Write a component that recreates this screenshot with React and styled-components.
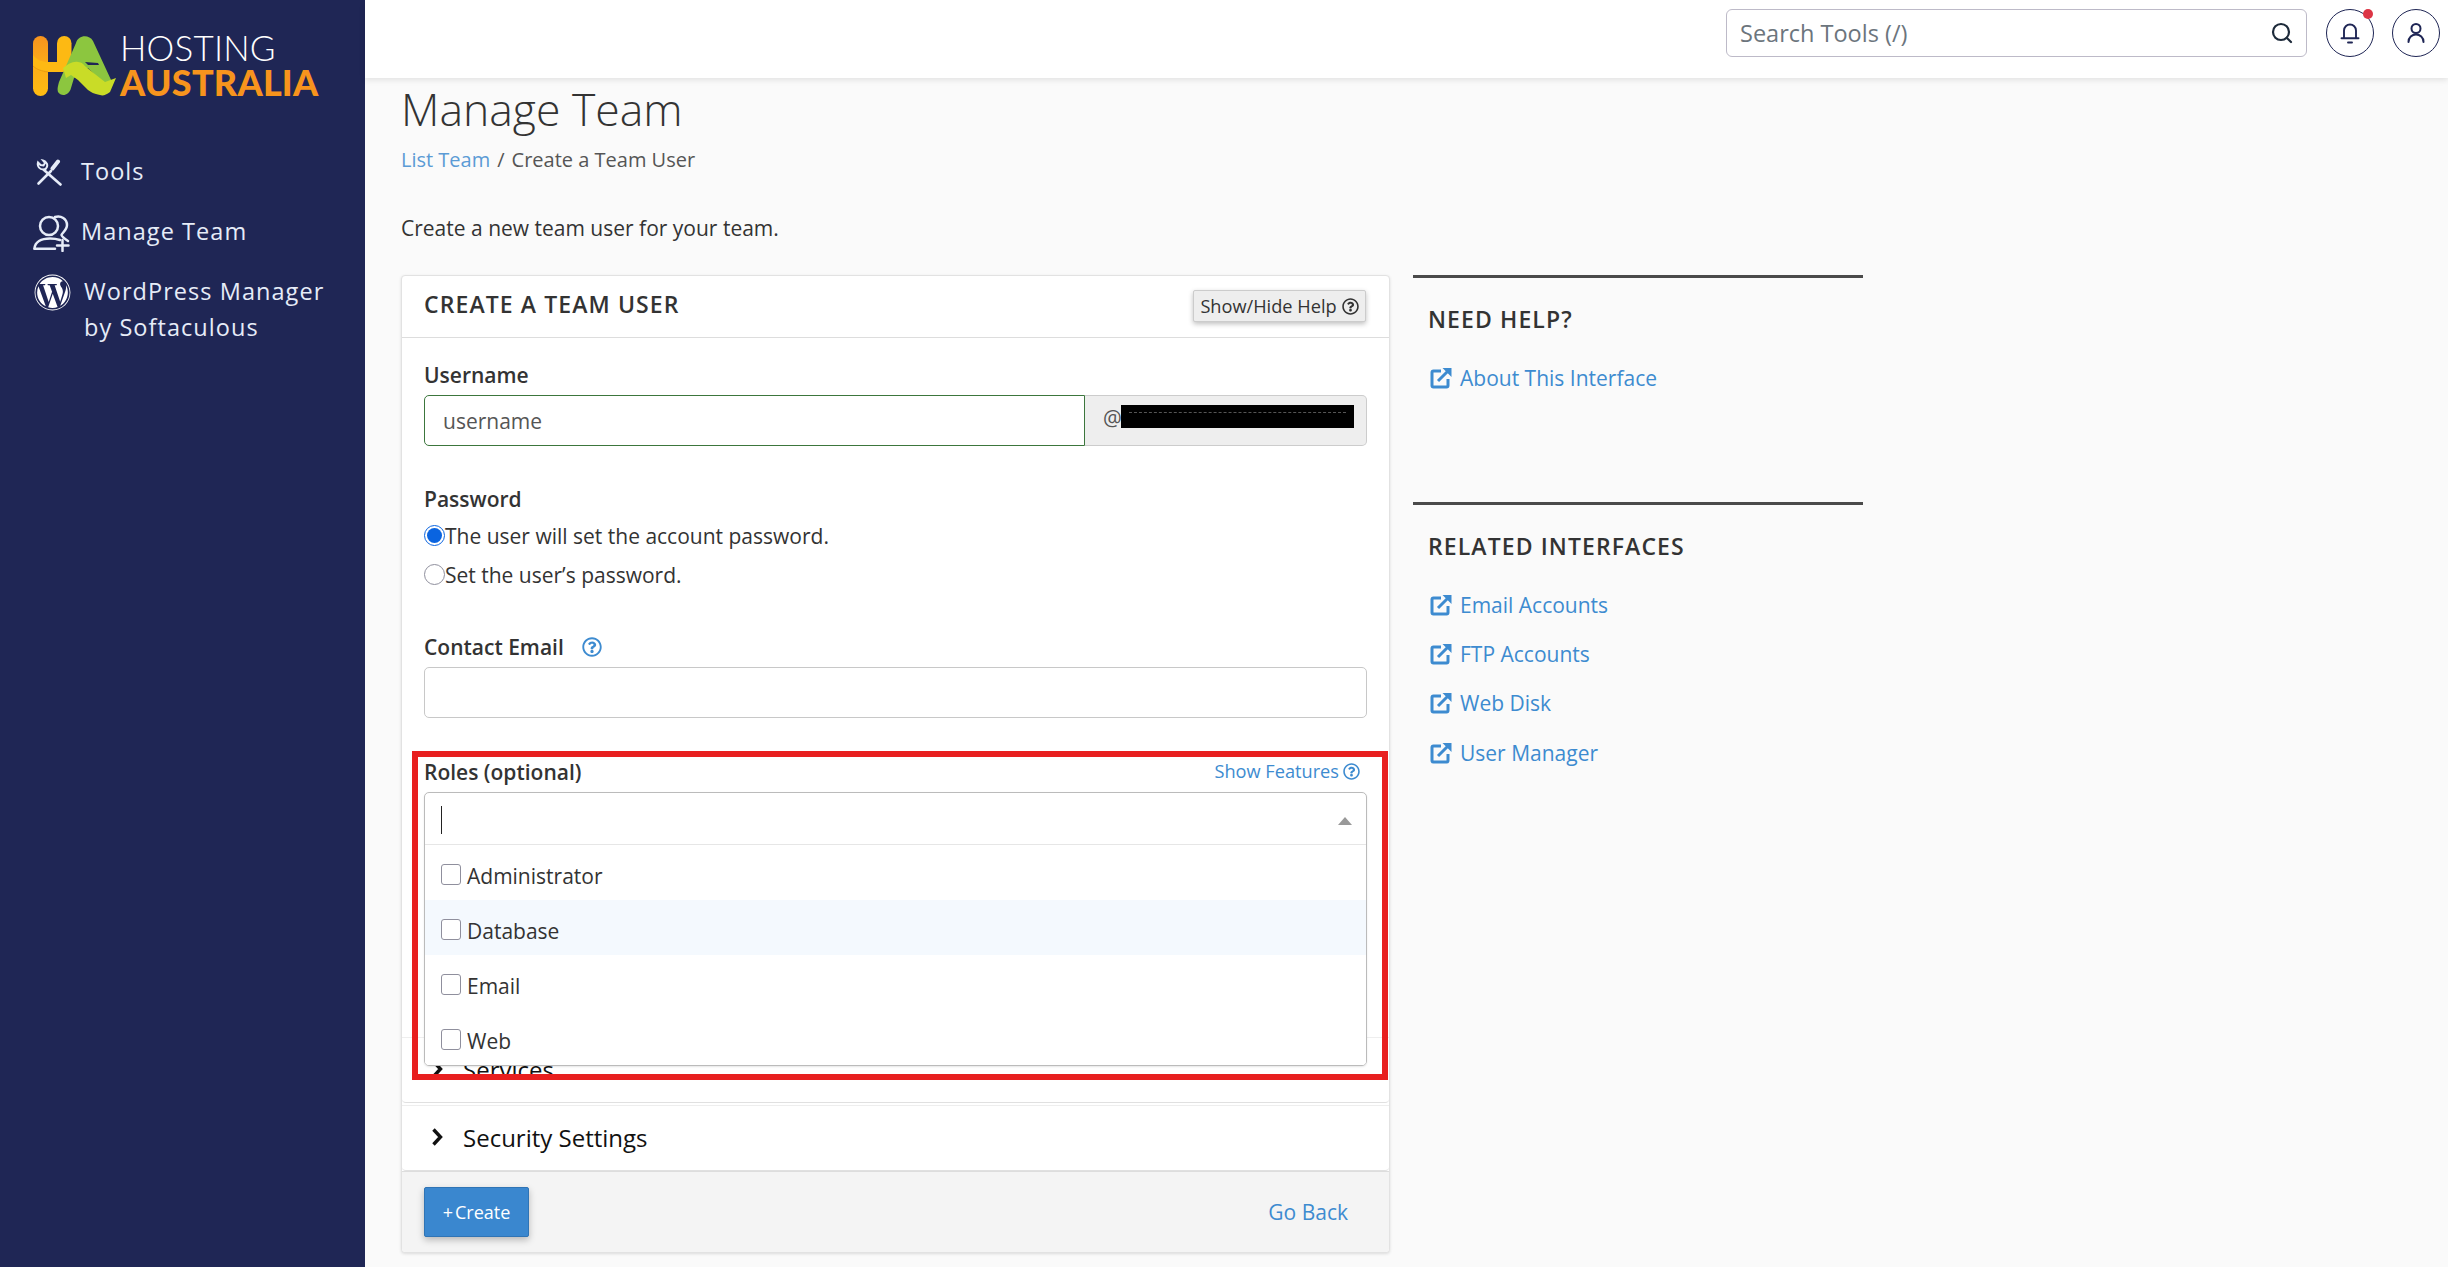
import React from "react";
import styled, { createGlobalStyle } from "styled-components";
import { FaWordpress, FaRegQuestionCircle } from "react-icons/fa";
import { Search } from "lucide-react";

const GlobalStyle = createGlobalStyle`
  html, body {
    margin: 0;
    height: 100%;
    overflow: hidden;
    background: #fafafa;
    font-family: "Open Sans", "Noto Sans", sans-serif;
    font-size: 21px;
    color: #333;
  }
  * { box-sizing: border-box; }
`;

const Shell = styled.div`
  display: flex;
  height: 1267px;
  overflow: hidden;
`;

/* sidebar */
const Sidebar = styled.aside`
  flex: 0 0 365px;
  background: #1f2655;
  padding: 36px 0 0 33px;
`;
const Brand = styled.div`
  display: flex;
  height: 60px;
  margin-bottom: 57px;
`;
const BrandWords = styled.div`
  margin-left: 3px;
  display: flex;
  flex-direction: column;
`;
const BrandTop = styled.span`
  font-family: "Lato", sans-serif;
  font-weight: 300;
  font-size: 35px;
  line-height: 25px;
  margin-top: -1px;
  letter-spacing: 0.2px;
  color: #fff;
`;
const BrandBottom = styled.span`
  font-family: "Lato", sans-serif;
  font-weight: 900;
  font-size: 36px;
  line-height: 32px;
  margin-top: 6px;
  letter-spacing: 0.2px;
  color: #f7941d;
`;
const NavList = styled.nav`
  display: flex;
  flex-direction: column;
`;
const NavItem = styled.a`
  display: flex;
  align-items: flex-start;
  color: #e6ecf8;
  font-size: 23.5px;
  line-height: 36px;
  letter-spacing: 1.05px;
  height: ${(p) => p.$h}px;
`;
const NavIcon = styled.span`
  flex: 0 0 ${(p) => p.$w}px;
  display: flex;
  padding: ${(p) => p.$top}px 0 0 ${(p) => p.$left}px;
  svg { display: block; }
`;

/* top bar */
const Main = styled.div`
  flex: 1;
  min-width: 0;
  display: flex;
  flex-direction: column;
`;
const TopBar = styled.header`
  flex: 0 0 78px;
  background: #fff;
  box-shadow: 0 2px 6px rgba(0, 0, 0, 0.1);
  display: flex;
  justify-content: flex-end;
  align-items: flex-start;
  padding: 9px 8px 0 0;
  gap: 18px;
  position: relative;
  z-index: 2;
`;
const SearchBox = styled.div`
  width: 581px;
  height: 48px;
  border: 1px solid #bdbac8;
  border-radius: 6px;
  display: flex;
  align-items: center;
  justify-content: space-between;
  padding: 0 12px 0 13px;
  color: #6c757d;
  font-size: 23.5px;
  margin-right: 1px;
  svg { color: #1d2a3a; }
`;
const RoundButton = styled.button`
  position: relative;
  width: 48px;
  height: 48px;
  padding: 0;
  border-radius: 50%;
  border: 1.5px solid #1f2655;
  background: #fff;
  color: #1f2655;
  display: flex;
  align-items: center;
  justify-content: center;
`;
const Dot = styled.span`
  position: absolute;
  top: -1px;
  right: 0;
  width: 10px;
  height: 10px;
  border-radius: 50%;
  background: #dc3545;
`;

/* page */
const Page = styled.main`
  flex: 1;
  padding: 0 36px;
  min-height: 0;
`;
const Title = styled.h1`
  margin: 6px 0 0;
  font-weight: 300;
  font-size: 44.5px;
  line-height: 50px;
  color: #333;
`;
const Breadcrumb = styled.div`
  margin-top: 12px;
  line-height: 27px;
  font-size: 20px;
  color: #555;
  font-weight: 400;
  a { color: #5b9bd5; }
  span { margin: 0 7px; }
`;
const Intro = styled.p`
  margin: 41px 0 0;
  line-height: 28px;
  color: #333;
`;
const Columns = styled.div`
  display: flex;
  align-items: flex-start;
  margin-top: 33px;
  gap: 23px;
`;

/* card */
const Card = styled.section`
  position: relative;
  width: 989px;
  background: #fff;
  border: 1px solid #e2e2e2;
  border-radius: 4px;
  box-shadow: 0 1px 3px rgba(0, 0, 0, 0.12);
`;
const CardHeader = styled.div`
  height: 62px;
  border-bottom: 1px solid #ddd;
  display: flex;
  align-items: flex-start;
  justify-content: space-between;
  padding: 14px 23px 0 22px;
`;
const CardTitle = styled.h2`
  margin: -1px 0 0;
  font-size: 23px;
  font-weight: 600;
  line-height: 30px;
  letter-spacing: 1.1px;
  color: #333;
`;
const HelpToggle = styled.button`
  height: 32px;
  width: 173px;
  padding: 0;
  border: 1px solid #ccc;
  border-radius: 2px;
  background: #eee;
  box-shadow: 0 2px 5px rgba(0, 0, 0, 0.25);
  color: #333;
  font-family: inherit;
  font-size: 18.2px;
  display: flex;
  align-items: center;
  justify-content: center;
  gap: 5px;
`;
const CardBody = styled.div`
  padding: 23px 22px 0;
  height: 699px;
`;
const FieldLabel = styled.label`
  display: block;
  font-weight: 600;
  line-height: 28px;
  color: #333;
`;
const Field = styled.div`
  margin-bottom: ${(p) => p.$mb || 0}px;
`;
const InputRow = styled.div`
  display: flex;
  height: 51px;
  margin-top: 6px;
`;
const TextInput = styled.div`
  flex: 1;
  border: 1px solid ${(p) => (p.$ok ? "#3c763d" : "#c8c8c8")};
  border-radius: ${(p) => (p.$ok ? "5px 0 0 5px" : "5px")};
  padding: 0 18px;
  display: flex;
  align-items: center;
  color: #555;
`;
const Addon = styled.div`
  position: relative;
  flex: 0 0 282px;
  background: #eee;
  border: 1px solid #ccc;
  border-left: 0;
  border-radius: 0 5px 5px 0;
  padding: 0 0 6px 18px;
  display: flex;
  align-items: center;
  color: #555;
`;
const Redaction = styled.span`
  position: absolute;
  left: 36px;
  top: 9px;
  width: 233px;
  height: 23px;
  background: #000;
  &::after {
    content: "";
    position: absolute;
    left: 8px;
    right: 8px;
    top: 7px;
    border-top: 1px dashed #555;
  }
`;
const RadioRow = styled.div`
  display: flex;
  align-items: center;
  height: 39px;
  color: #333;
`;
const RadioGroup = styled.div`
  margin-top: 3px;
`;
const Radio = styled.span`
  width: 21px;
  height: 21px;
  border-radius: 50%;
  border: 1px solid ${(p) => (p.$on ? "#0a64e0" : "#8f8f9d")};
  background: #fff;
  display: flex;
  align-items: center;
  justify-content: center;
  &::after {
    content: "";
    width: 15px;
    height: 15px;
    border-radius: 50%;
    background: ${(p) => (p.$on ? "#0a64e0" : "transparent")};
  }
`;
const LabelRow = styled.div`
  display: flex;
  align-items: center;
  justify-content: ${(p) => (p.$split ? "space-between" : "flex-start")};
  gap: 18px;
`;
const HelpLink = styled.a`
  display: flex;
  align-items: center;
  gap: 4px;
  color: #3d8bd0;
  font-size: 18.2px;
  padding-right: 7px;
  margin-top: -2px;
`;
const RolesField = styled.div`
  position: relative;
  z-index: 1;
`;
const Dropdown = styled.div`
  position: absolute;
  left: 0;
  right: 0;
  top: 34px;
  height: 274px;
  background: #fff;
  border: 1px solid #bbb;
  border-radius: 5px;
  box-shadow: 0 1px 2px rgba(0, 0, 0, 0.1);
  overflow: hidden;
`;
const ComboInput = styled.div`
  position: relative;
  height: 52px;
  border-bottom: 1px solid #e6e6e6;
  &::before {
    content: "";
    position: absolute;
    left: 16px;
    top: 13px;
    height: 28px;
    border-left: 1px solid #222;
  }
  &::after {
    content: "";
    position: absolute;
    right: 14px;
    top: 24px;
    border-left: 7px solid transparent;
    border-right: 7px solid transparent;
    border-bottom: 8px solid #999;
  }
`;
const Option = styled.div`
  height: 55px;
  padding: 6px 16px 0;
  display: flex;
  align-items: center;
  gap: 6px;
  color: #333;
  background: ${(p) => (p.$hover ? "#f4f9fe" : "#fff")};
`;
const Check = styled.span`
  width: 20px;
  height: 21px;
  margin-top: -3px;
  border: 1px solid #8f8f9d;
  border-radius: 3px;
  background: #fff;
`;
const Accordion = styled.div`
  height: 66px;
  margin-bottom: ${(p) => p.$mb || 0}px;
  border-top: 1px solid #eee;
  border-bottom: 1px solid #e0e0e0;
  border-radius: 0 0 4px 4px;
  padding: 0 0 2px 28px;
  display: flex;
  align-items: center;
  gap: 19px;
  font-size: 24px;
  color: #111;
  svg { display: block; }
`;
const CardFooter = styled.div`
  height: 81px;
  background: #f4f4f4;
  border-top: 1px solid #ddd;
  border-radius: 0 0 4px 4px;
  display: flex;
  align-items: center;
  justify-content: space-between;
  padding: 0 41px 0 22px;
`;
const CreateButton = styled.button`
  width: 105px;
  height: 50px;
  padding: 0;
  background: #3a87cf;
  border: 1px solid #2f74b5;
  border-radius: 2px;
  box-shadow: 0 3px 7px rgba(0, 0, 0, 0.25);
  color: #fff;
  font-family: inherit;
  font-size: 18px;
  display: flex;
  align-items: center;
  justify-content: center;
  gap: 2px;
`;
const BackLink = styled.a`
  color: #3d8bd0;
  font-size: 21px;
`;
/* the red mark drawn over the screenshot */
const Highlight = styled.div`
  position: absolute;
  left: 10px;
  top: 475px;
  width: 976px;
  height: 329px;
  border: 6px solid #e81f1f;
  pointer-events: none;
  z-index: 3;
`;

/* right column */
const Aside = styled.aside`
  width: 450px;
`;
const AsideBlock = styled.div`
  border-top: 3px solid #4a4a4a;
  padding: 26px 15px 0;
  height: ${(p) => p.$h}px;
`;
const AsideTitle = styled.h3`
  margin: 0 0 19px;
  font-size: 23px;
  line-height: 30px;
  font-weight: 600;
  letter-spacing: 1.1px;
  color: #333;
`;
const AsideLink = styled.a`
  display: flex;
  align-items: center;
  gap: 8px;
  height: 49.3px;
  padding-left: 2px;
  color: #3d8bd0;
  font-size: 21px;
`;

const ExternalIcon = () => (
  <svg width="22" height="22" viewBox="0 0 22 22" fill="none" stroke="#3d8bd0" strokeWidth="3">
    <path d="M11 4H3.500A1.500 1.500 0 0 0 2 5.500v13A1.500 1.500 0 0 0 3.500 20h13a1.500 1.500 0 0 0 1.500-1.500V12" />
    <path d="M8 14 19 3" />
    <path d="M12.500 1H21.500V10L12.500 1Z" fill="#3d8bd0" stroke="none" />
  </svg>
);

const ToolsIcon = () => (
  <svg width="27" height="27" viewBox="0 0 27 27" fill="none" stroke="#e6ecf8" strokeWidth="2.600" strokeLinecap="round">
    <path d="M8 11 24.500 25.500" />
    <path d="M2.500 24.500 15 12" />
    <path d="M16.500 9.500 22 2.500" strokeWidth="4" />
    <path d="M7 1.500 9 4 7.500 6.500 4.500 6 2 3.500C1 7 3.500 11 8 10.500 11 10 12 6 10.500 4 9.500 2.500 8.500 1.800 7 1.500Z" strokeWidth="2" />
  </svg>
);

const TeamIcon = () => (
  <svg width="37" height="38" viewBox="0 0 37 38" fill="none" stroke="#e6ecf8" strokeWidth="2.500" strokeLinecap="round">
    <circle cx="16" cy="12" r="9" />
    <path d="M22 3C28 1 34 5 34 11 34 16 29 19 28.500 21 29 23 32 25 35 27" />
    <path d="M1.500 34.500C2 28 8 24.500 17 24.500 21 24.500 24 25 27 26" />
    <path d="M1.500 34.800H22" />
    <path d="M29.500 26V37M24 31.500H35.500" />
  </svg>
);

const BellIcon = () => (
  <svg width="24" height="24" viewBox="0 0 24 24" fill="none" stroke="currentColor" strokeWidth="1.900" strokeLinecap="round">
    <path d="M6 17V9.500a6 6 0 0 1 12 0V17" />
    <path d="M3.500 17.200h17" />
    <path d="M10 21.500h4" />
  </svg>
);

const UserIcon = () => (
  <svg width="24" height="24" viewBox="0 0 24 24" fill="none" stroke="currentColor" strokeWidth="2">
    <circle cx="12" cy="7.500" r="4.500" />
    <path d="M4.500 21C4.500 16.500 8 13.500 12 13.500S19.500 16.500 19.500 21" strokeLinecap="round" />
  </svg>
);

const ChevronIcon = () => (
  <svg width="14" height="18" viewBox="0 0 14 18" fill="none" stroke="#111" strokeWidth="3.400">
    <path d="M3.500 1.500 10.500 9l-7 7.500" />
  </svg>
);

const LogoMark = () => (
  <svg width="84" height="60" viewBox="5 6 84 60">
    <defs>
      <linearGradient id="legFill" x1="0" y1="0" x2="0" y2="1">
        <stop offset="0" stopColor="#f7931e" />
        <stop offset="0.45" stopColor="#fbab19" />
        <stop offset="1" stopColor="#ffbc12" />
      </linearGradient>
    </defs>
    <rect x="5" y="6" width="15" height="60" rx="7.500" fill="url(#legFill)" />
    <rect x="29" y="6" width="14.500" height="34" rx="7.250" fill="#fdb913" />
    <path d="M5 25C9 30 14 32 20 32H44L40 42H20C13 42 8 41 5 37Z" fill="#fdb913" />
    <path d="M5 36C9 40 14 41 20 42" fill="none" stroke="#e89a12" strokeWidth="1" />
    <path d="M48 13C50 5 61 4 65 11L84 52 76 54 60 38 46 48 43 58C41 66 33 67 30 62 29 59 30 56 31 52Z" fill="#8cc63f" />
    <path d="M57 32 70 33 71 35 60 35Z" fill="#1f2655" />
    <path d="M35 38C40 34 45 31 50 32 54 32 56 35 58 37L77 52 88 48 82 62C78 65 75 66 72 65 66 64 63 62 60 60L50 50 43 45 38 48Z" fill="#c9dc27" />
  </svg>
);

const relatedLinks = ["Email Accounts", "FTP Accounts", "Web Disk", "User Manager"];
const roles = ["Administrator", "Database", "Email", "Web"];

const App = () => {
  return (
    <Shell>
      <GlobalStyle />
      <Sidebar>
        <Brand>
          <LogoMark />
          <BrandWords>
            <BrandTop>HOSTING</BrandTop>
            <BrandBottom>AUSTRALIA</BrandBottom>
          </BrandWords>
        </Brand>
        <NavList>
          <NavItem $h={60}>
            <NavIcon $w={48} $top={6} $left={3}>
              <ToolsIcon />
            </NavIcon>
            Tools
          </NavItem>
          <NavItem $h={60}>
            <NavIcon $w={48} $top={1} $left={0}>
              <TeamIcon />
            </NavIcon>
            Manage Team
          </NavItem>
          <NavItem $h={72}>
            <NavIcon $w={51} $top={1} $left={1}>
              <FaWordpress size={37} color="#fff" />
            </NavIcon>
            <span>
              WordPress Manager
              <br />
              by Softaculous
            </span>
          </NavItem>
        </NavList>
      </Sidebar>
      <Main>
        <TopBar>
          <SearchBox>
            Search Tools (/)
            <Search size={24} strokeWidth={2.2} />
          </SearchBox>
          <RoundButton>
            <BellIcon />
            <Dot />
          </RoundButton>
          <RoundButton>
            <UserIcon />
          </RoundButton>
        </TopBar>
        <Page>
          <Title>Manage Team</Title>
          <Breadcrumb>
            <a>List Team</a>
            <span>/</span>Create a Team User
          </Breadcrumb>
          <Intro>Create a new team user for your team.</Intro>
          <Columns>
            <Card>
              <CardHeader>
                <CardTitle>CREATE A TEAM USER</CardTitle>
                <HelpToggle>
                  Show/Hide Help
                  <FaRegQuestionCircle size={17} />
                </HelpToggle>
              </CardHeader>
              <CardBody>
                <Field $mb={39}>
                  <FieldLabel>Username</FieldLabel>
                  <InputRow>
                    <TextInput $ok>username</TextInput>
                    <Addon>
                      @<Redaction />
                    </Addon>
                  </InputRow>
                </Field>
                <Field $mb={39}>
                  <FieldLabel>Password</FieldLabel>
                  <RadioGroup>
                    <RadioRow>
                      <Radio $on />
                      The user will set the account password.
                    </RadioRow>
                    <RadioRow>
                      <Radio />
                      Set the user’s password.
                    </RadioRow>
                  </RadioGroup>
                </Field>
                <Field $mb={40}>
                  <LabelRow>
                    <FieldLabel>Contact Email</FieldLabel>
                    <FaRegQuestionCircle size={20} color="#3d8bd0" />
                  </LabelRow>
                  <InputRow>
                    <TextInput />
                  </InputRow>
                </Field>
                <RolesField>
                  <LabelRow $split>
                    <FieldLabel>Roles (optional)</FieldLabel>
                    <HelpLink>
                      Show Features
                      <FaRegQuestionCircle size={17} />
                    </HelpLink>
                  </LabelRow>
                  <Dropdown>
                    <ComboInput />
                    {roles.map((role) => (
                      <Option key={role} $hover={role === "Database"}>
                        <Check />
                        {role}
                      </Option>
                    ))}
                  </Dropdown>
                </RolesField>
              </CardBody>
              <Accordion $mb={2}>
                <ChevronIcon />
                Services
              </Accordion>
              <Accordion>
                <ChevronIcon />
                Security Settings
              </Accordion>
              <CardFooter>
                <CreateButton>
                  <span>+</span>Create
                </CreateButton>
                <BackLink>Go Back</BackLink>
              </CardFooter>
              <Highlight />
            </Card>
            <Aside>
              <AsideBlock $h={227}>
                <AsideTitle>NEED HELP?</AsideTitle>
                <AsideLink>
                  <ExternalIcon />
                  About This Interface
                </AsideLink>
              </AsideBlock>
              <AsideBlock>
                <AsideTitle>RELATED INTERFACES</AsideTitle>
                {relatedLinks.map((label) => (
                  <AsideLink key={label}>
                    <ExternalIcon />
                    {label}
                  </AsideLink>
                ))}
              </AsideBlock>
            </Aside>
          </Columns>
        </Page>
      </Main>
    </Shell>
  );
};

export default App;
